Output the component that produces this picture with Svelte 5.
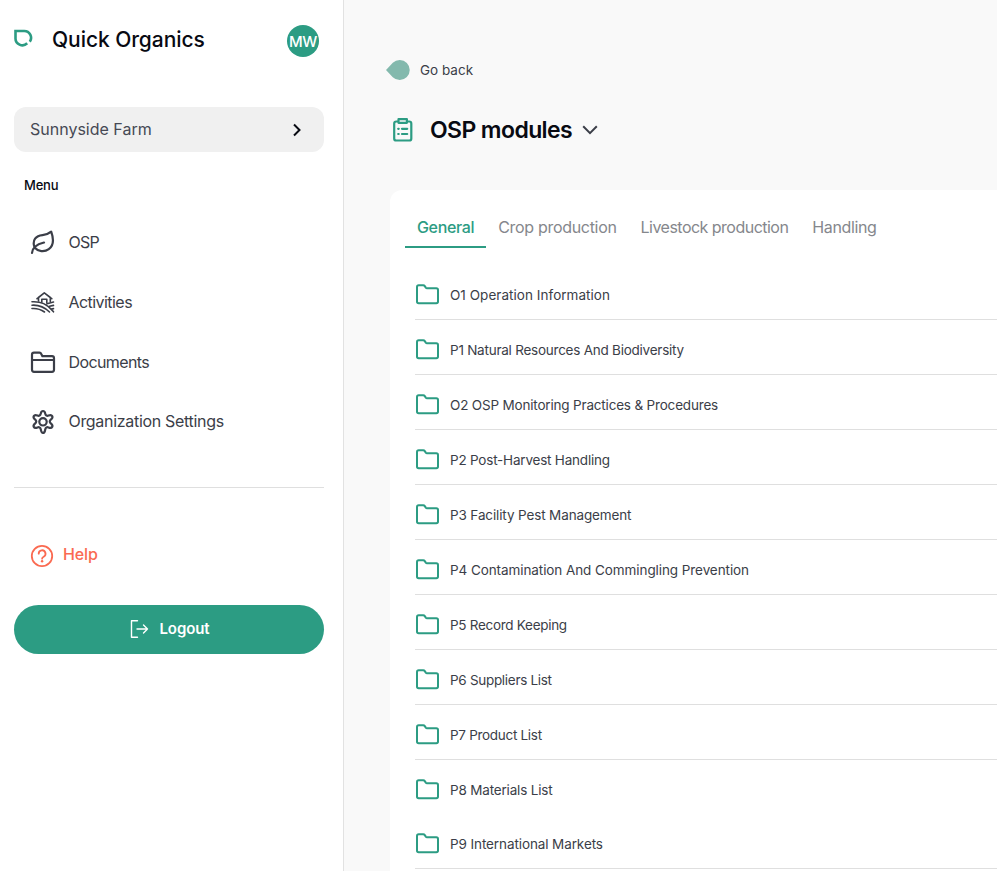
<script>
  const menu = [
    { icon: 'leaf', label: 'OSP' },
    { icon: 'farm', label: 'Activities' },
    { icon: 'folder', label: 'Documents' },
    { icon: 'gear', label: 'Organization Settings' },
  ];

  const modules = [
    { title: 'O1 Operation Information', tracking: 0.04 },
    { title: 'P1 Natural Resources And Biodiversity', tracking: -0.24 },
    { title: 'O2 OSP Monitoring Practices & Procedures', tracking: -0.18 },
    { title: 'P2 Post-Harvest Handling', tracking: -0.21 },
    { title: 'P3 Facility Pest Management', tracking: -0.13 },
    { title: 'P4 Contamination And Commingling Prevention', tracking: -0.08 },
    { title: 'P5 Record Keeping', tracking: -0.29 },
    { title: 'P6 Suppliers List', tracking: -0.3 },
    { title: 'P7 Product List', tracking: -0.3 },
    { title: 'P8 Materials List', tracking: -0.18, plain: true },
    { title: 'P9 International Markets', tracking: -0.1 },
  ];

  const tabs = [
    { id: 'general', label: 'General' },
    { id: 'crop', label: 'Crop production' },
    { id: 'livestock', label: 'Livestock production' },
    { id: 'handling', label: 'Handling' },
  ];
  let activeTab = $state('general');
</script>

<div class="layout">
  <aside class="sidebar">
    <header class="brand">
      <svg class="brand__logo" width="20" height="18" viewBox="0 0 20 18">
        <path d="M15.800 12.700A6.800 6.800 0 0 0 10.300 2H1.500v7a6.900 6.900 0 0 0 11.700 5.300" />
      </svg>
      <span class="brand__name">Quick Organics</span>
      <span class="avatar">MW</span>
    </header>

    <button class="farm">
      <span>Sunnyside Farm</span>
      <svg width="10" height="14" viewBox="0 0 10 14"><path d="m2 1.500 5.500 5.500L2 12.500" /></svg>
    </button>

    <h2 class="menu-title">Menu</h2>
    <nav class="menu">
      {#each menu as item}
        <a class="menu__item" href="#{item.icon}">
          <svg class="menu__icon" width="26" height="26" viewBox="0 0 26 26">
            {#if item.icon === 'leaf'}
              <path d="M2 24c.3-5 4-8.500 12-10.500M4.500 18.500C1.900 11 6 6.600 12.500 6.100c4-.3 6-1.100 8.700-3.400 2.500 7 2.300 14-2.400 17.400-4.400 3.200-10.800 2.500-14.300-1.600z" />
            {:else if item.icon === 'farm'}
              <g class="thin">
                <path d="M8.500 12V8.500l5.800-4.600 6 4.600v4M7 9.700l1.500-1.200M21.800 9.700l-1.500-1.200M11.800 13.300v-3.100h5v3.600" />
                <path d="M2 12.800c9-.5 15 2 21.500 10M2 16.200c7-.5 12 1.500 17.500 6.800M2 19.500c5-.4 9 1 12.500 3.500M17 14.700l6.500-1.700M19.500 17.300l4-.9M21.500 20l2-.4" />
              </g>
            {:else if item.icon === 'folder'}
              <path d="M2 11h22M4 3.700h5.500c1 0 1.400.4 1.800 1.300l1.100 2.200H22c1.400 0 2 .7 2 2v11.600c0 1.300-.7 2-2 2H4c-1.300 0-2-.7-2-2V5.700c0-1.300.7-2 2-2z" />
            {:else}
              <path d="M10.700 4.800C11 2.900 11.600 2 13 2s2 .9 2.300 2.800c.3 1.700 1.700 2.400 3.200 1.800 1.900-.8 3-.7 3.700.5s.2 2.200-1.400 3.500c-1.400 1.100-1.400 2.700 0 3.800 1.600 1.300 2.100 2.300 1.400 3.500s-1.800 1.300-3.700.5c-1.500-.6-2.900.1-3.200 1.800C15 22.100 14.400 24 13 24s-2-1.900-2.300-3.800c-.3-1.700-1.700-2.400-3.200-1.800-1.900.8-3 .7-3.700-.5s-.2-2.200 1.400-3.500c1.400-1.100 1.400-2.700 0-3.800C3.600 9.300 3.100 8.300 3.800 7.100s1.800-1.300 3.700-.5c1.500.6 2.900-.1 3.200-1.800z" />
              <circle cx="13" cy="12.800" r="3.700" />
            {/if}
          </svg>
          <span class="menu__label menu__label--{item.icon}">{item.label}</span>
        </a>
      {/each}
    </nav>

    <a class="help" href="#help">
      <svg width="24" height="24" viewBox="0 0 24 24">
        <circle cx="12" cy="12" r="10.200" />
        <path d="M8.700 9.700a3.400 3.400 0 1 1 5 3c-1.300.7-1.600 1-1.600 2" />
        <circle class="dot" cx="12.100" cy="17.300" r="1.200" />
      </svg>
      <span>Help</span>
    </a>

    <button class="logout">
      <svg width="20" height="20" viewBox="0 0 20 20">
        <path d="M8.500 1.700H2.500v16.600h6M8 10h10.500M14.500 6l4 4-4 4" />
      </svg>
      <span>Logout</span>
    </button>
  </aside>

  <main class="content">
    <a class="back" href="#back">
      <svg width="25" height="20" viewBox="0 0 25 20">
        <path d="M0 10 6.800 2.800a10 10 0 1 1 0 14.400z" />
      </svg>
      <span>Go back</span>
    </a>

    <div class="heading">
      <svg class="heading__icon" width="20" height="24" viewBox="0 0 20 24">
        <path d="M5.500 3.500H3.300C2 3.500 1.200 4.300 1.200 5.600v14.800c0 1.300.8 2.100 2.100 2.100h12.900c1.300 0 2.100-.8 2.100-2.100V5.600c0-1.300-.8-2.100-2.100-2.100h-2.200M5.500 1.200h8.400v3.600H5.500zM9 10.800h5.200M9 16h5.200M5.200 10.800h.5M5.200 16h.5" />
      </svg>
      <h1>OSP modules</h1>
      <svg class="heading__chevron" width="16" height="10" viewBox="0 0 16 10"><path d="m1.200 1.300 6.800 6.800 6.800-6.800" /></svg>
    </div>

    <section class="card">
      <div class="tabs">
        {#each tabs as tab}
          <button
            class="tab tab--{tab.id}"
            class:tab--active={activeTab === tab.id}
            onclick={() => (activeTab = tab.id)}
          >{tab.label}</button>
        {/each}
      </div>

      <ul class="modules">
        {#each modules as mod}
          <li class="module" class:module--plain={mod.plain}>
            <svg width="25" height="21" viewBox="0 0 25 21">
              <path d="M3.700 1.200h4.500c.8 0 1.200.3 1.600.9l1 1.500c.3.400.6.600 1.200.6h9.300c1.100 0 1.700.6 1.700 1.700v11.700c0 1.100-.6 1.700-1.700 1.700H3.700c-1.100 0-1.700-.6-1.700-1.700V2.900c0-1.100.6-1.700 1.700-1.700z" />
            </svg>
            <span style:letter-spacing="{mod.tracking}px">{mod.title}</span>
          </li>
        {/each}
      </ul>
    </section>
  </main>
</div>

<style>
  :global(body) {
    margin: 0;
    overflow: hidden;
    font-family: Inter, 'Liberation Sans', sans-serif;
  }
  .layout {
    display: flex;
    width: 100%;
    height: 871px;
    overflow: hidden;
    background: #f9f9f9;
    color: #3b3e48;
  }
  button {
    font: inherit;
    border: 0;
    background: none;
    padding: 0;
    cursor: pointer;
  }
  a { color: inherit; text-decoration: none; }
  svg {
    flex-shrink: 0;
    fill: none;
    stroke: currentColor;
    stroke-width: 2;
    stroke-linecap: round;
    stroke-linejoin: round;
  }
  span, h1, h2, button { white-space: nowrap; }

  .sidebar {
    box-sizing: border-box;
    flex: 0 0 344px;
    padding: 25px 19px 0 14px;
    border-right: 1px solid #e2e2e2;
    background: #fff;
  }
  .brand {
    display: flex;
    align-items: center;
    height: 32px;
    padding-right: 5px;
  }
  .brand__logo {
    margin: -6px 18px 0 0;
    color: #2c9c83;
    stroke-width: 2.6;
    stroke-linecap: butt;
    stroke-linejoin: miter;
  }
  .brand__name {
    flex: 1;
    margin-top: -3px;
    font-size: 21px;
    font-weight: 500;
    letter-spacing: -0.06px;
    color: #080a12;
  }
  .avatar {
    width: 32px;
    height: 32px;
    border-radius: 50%;
    background: #2c9c83;
    color: #fff;
    font-size: 15px;
    font-weight: 500;
    letter-spacing: -0.4px;
    line-height: 33px;
    text-align: center;
  }

  .farm {
    display: flex;
    align-items: center;
    justify-content: space-between;
    width: 100%;
    height: 45px;
    margin-top: 50px;
    padding: 0 22px 0 16px;
    border-radius: 12px;
    background: #f0f0f0;
    color: #464954;
    font-size: 16px;
  }
  .farm span { margin-top: -2px; }
  .farm svg { color: #080a12; stroke-linecap: butt; stroke-linejoin: miter; }
  .menu-title {
    margin: 24px 0 0 10px;
    font-size: 13px;
    line-height: 18px;
    font-weight: 450;
    letter-spacing: -0.2px;
    color: #080a12;
  }
  .menu {
    display: flex;
    flex-direction: column;
    gap: 34px;
    height: 258px;
    margin-top: 35px;
    padding-left: 16px;
    border-bottom: 1px solid #dfdfdf;
  }
  .menu__item {
    display: flex;
    align-items: center;
    gap: 12.500px;
    font-size: 16px;
    line-height: 26px;
  }
  .menu__icon { stroke-width: 2.2; }
  .menu__icon .thin { stroke-width: 1.6; }
  .menu__label--leaf { letter-spacing: -0.7px; }
  .menu__label--farm { letter-spacing: -0.55px; }
  .menu__label--folder { letter-spacing: -0.6px; }
  .menu__label--gear { margin-top: -2px; letter-spacing: -0.31px; }

  .help {
    display: flex;
    align-items: center;
    gap: 9px;
    height: 24px;
    margin-top: 56px;
    padding-left: 16px;
    color: #fa6a51;
    font-size: 16px;
    font-weight: 500;
  }
  .help svg { stroke-width: 1.8; }
  .help span { margin-top: -4px; letter-spacing: -0.1px; }
  .help .dot { fill: currentColor; stroke: none; }
  .logout {
    display: flex;
    align-items: center;
    justify-content: center;
    gap: 10px;
    width: 100%;
    height: 49px;
    margin-top: 37px;
    padding-left: 1px;
    border-radius: 25px;
    background: #2c9c83;
    color: #fff;
    font-size: 15px;
    font-weight: 600;
    letter-spacing: -0.1px;
  }
  .logout svg { margin-top: -1px; stroke-width: 1.4; }
  .logout span { margin-top: -2px; }

  .content {
    flex: 1;
    min-width: 0;
    padding: 60px 0 0 46px;
  }
  .back {
    display: flex;
    align-items: center;
    gap: 9px;
    height: 20px;
    margin-left: -4px;
    font-size: 13.500px;
  }
  .back svg { fill: #83b9ad; stroke: none; }
  .heading {
    display: flex;
    align-items: center;
    height: 30px;
    margin-top: 35px;
    padding-left: 3px;
  }
  .heading__icon { color: #2c9c83; stroke-width: 2.2; }
  h1 {
    margin: 0 10px 0 17px;
    font-size: 23px;
    line-height: 30px;
    font-weight: 600;
    letter-spacing: -0.6px;
    color: #080a12;
  }
  .heading__chevron { stroke-linecap: butt; stroke-linejoin: miter; }

  .card {
    box-sizing: border-box;
    height: 720px;
    margin-top: 45px;
    padding: 18px 0 0 15px;
    border-top-left-radius: 12px;
    background: #fff;
  }
  .tabs { display: flex; height: 40px; }
  .tab {
    box-sizing: border-box;
    height: 40px;
    padding: 0 12px;
    border-bottom: 2px solid transparent;
    font-size: 16px;
    color: #85878c;
  }
  .tab--active {
    border-bottom-color: #2c9c83;
    color: #2c9c83;
    font-weight: 500;
  }
  .tab--general { letter-spacing: -0.35px; }
  .tab--crop { letter-spacing: -0.31px; }
  .tab--livestock { letter-spacing: -0.52px; }
  .tab--handling { letter-spacing: -0.38px; }
  .modules {
    margin: 17px 0 0 10px;
    padding: 0;
    list-style: none;
  }
  .module {
    box-sizing: border-box;
    display: flex;
    align-items: center;
    gap: 10px;
    height: 55px;
    padding-top: 5px;
    border-bottom: 1px solid #dfdfdf;
    font-size: 13.500px;
  }
  .module svg { color: #2c9c83; }
  .module span { margin-top: 1px; }
  .module--plain { height: 54px; border-bottom: 0; }
</style>
